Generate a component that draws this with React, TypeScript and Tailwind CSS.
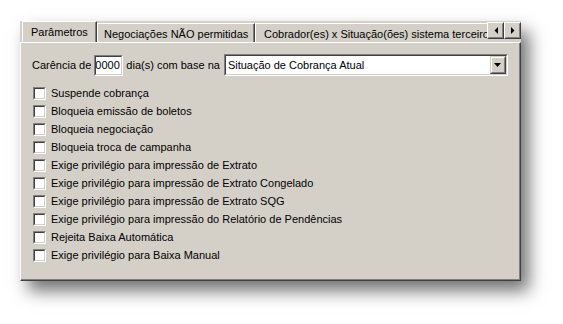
import React from "react";

const items = [
  "Suspende cobrança",
  "Bloqueia emissão de boletos",
  "Bloqueia negociação",
  "Bloqueia troca de campanha",
  "Exige privilégio para impressão de Extrato",
  "Exige privilégio para impressão de Extrato Congelado",
  "Exige privilégio para impressão de Extrato SQG",
  "Exige privilégio para impressão do Relatório de Pendências",
  "Rejeita Baixa Automática",
  "Exige privilégio para Baixa Manual",
];

function Checkbox() {
  return (
    <div className="w-[13px] h-[13px] border border-t-[#808080] border-l-[#808080] border-b-white border-r-white shrink-0">
      <div className="w-full h-full bg-white border border-t-[#404040] border-l-[#404040] border-b-[#d4d0c8] border-r-[#d4d0c8]" />
    </div>
  );
}

function ScrollBtn({ dir }: { dir: "l" | "r" }) {
  return (
    <div className="w-[17px] h-[17px] bg-[#d4d0c8] border border-t-white border-l-white border-b-[#404040] border-r-[#404040] flex">
      <div className="flex-1 border border-t-[#d4d0c8] border-l-[#d4d0c8] border-b-[#808080] border-r-[#808080] flex items-center justify-center">
        <svg width="4" height="7" viewBox="0 0 4 7">
          {dir === "l" ? (
            <polygon points="4,0 4,7 0.5,3.5" fill="#000" />
          ) : (
            <polygon points="0,0 0,7 3.5,3.5" fill="#000" />
          )}
        </svg>
      </div>
    </div>
  );
}

export default function App() {
  return (
    <div
      className="w-[563px] h-[324px] bg-white pt-[21px] pl-[20px] text-[11px] text-black leading-none"
      style={{ fontFamily: '"Liberation Sans", Arial, sans-serif' }}
    >
      <div className="w-[501px] h-[260px] bg-[#d4d0c8] flex flex-col shadow-[8px_10px_16px_rgba(0,0,0,0.55)]">
        {/* tab strip */}
        <div className="h-[21px] flex items-end relative z-10">
          <div className="flex-1 flex items-end overflow-hidden h-full pl-[2px]">
            <div className="h-[22px] -mb-px w-[75px] shrink-0 bg-[#d4d0c8] border-t border-l border-t-white border-l-white border-r border-r-[#404040] flex">
              <div className="flex-1 border-r border-r-[#808080] pl-[8px] pt-[5px]">Parâmetros</div>
            </div>
            <div className="h-[19px] w-[158px] shrink-0 border-t border-l border-t-white border-l-white border-r border-r-[#404040] flex">
              <div className="flex-1 border-r border-r-[#808080] pl-[6px] pt-[5px] whitespace-nowrap">Negociações NÃO permitidas</div>
            </div>
            <div className="h-[19px] w-[260px] shrink-0 border-t border-l border-t-white border-l-white border-r border-r-[#404040] flex">
              <div className="flex-1 border-r border-r-[#808080] pl-[8px] pt-[5px] whitespace-nowrap">Cobrador(es) x Situação(ões) sistema terceiro</div>
            </div>
          </div>
          <div className="flex self-start pt-[1px]">
            <ScrollBtn dir="l" />
            <ScrollBtn dir="r" />
          </div>
        </div>
        {/* content */}
        <div className="flex-1 border-t border-l border-t-white border-l-white border-r border-b border-r-[#404040] border-b-[#404040] flex">
          <div className="flex-1 border-r border-b border-r-[#808080] border-b-[#808080] pt-[11px] pl-[11px]">
            <div className="flex items-center h-[22px]">
              <span>Carência de</span>
              <div className="ml-[3px] w-[29px] h-[21px] border border-t-[#808080] border-l-[#808080] border-b-white border-r-white">
                <div className="w-full h-full bg-white border border-t-[#404040] border-l-[#404040] border-b-[#d4d0c8] border-r-[#d4d0c8] flex items-center overflow-hidden">
                  <span className="-ml-[1px]">0000</span>
                </div>
              </div>
              <span className="ml-[3px]">dia(s) com base na</span>
              <div className="ml-[4px] w-[284px] h-[22px] border border-t-[#808080] border-l-[#808080] border-b-white border-r-white">
                <div className="w-full h-full bg-white border border-t-[#404040] border-l-[#404040] border-b-[#d4d0c8] border-r-[#d4d0c8] flex items-center">
                  <span className="flex-1 pl-[2px]">Situação de Cobrança Atual</span>
                  <div className="w-[16px] h-full bg-[#d4d0c8] border border-t-[#d4d0c8] border-l-[#d4d0c8] border-b-[#404040] border-r-[#404040] flex">
                    <div className="flex-1 border border-t-white border-l-white border-b-[#808080] border-r-[#808080] flex items-center justify-center">
                      <svg width="7" height="4" viewBox="0 0 7 4">
                        <polygon points="0,0 7,0 3.5,4" fill="#000" />
                      </svg>
                    </div>
                  </div>
                </div>
              </div>
            </div>
            <div className="mt-[8px] flex flex-col pl-[1px]">
              {items.map((t) => (
                <div key={t} className="h-[18px] flex items-center gap-[5px]">
                  <Checkbox />
                  <span className="whitespace-nowrap">{t}</span>
                </div>
              ))}
            </div>
          </div>
        </div>
      </div>
    </div>
  );
}
